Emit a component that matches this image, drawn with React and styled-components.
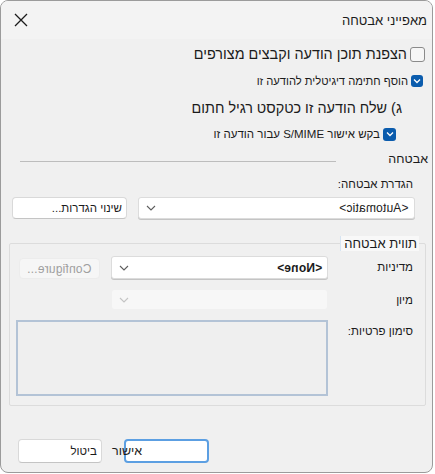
import React from "react";
import styled, { createGlobalStyle } from "styled-components";

const GlobalStyle = createGlobalStyle`
    html, body {
        margin: 0;
        padding: 0;
        background: #ffffff;
    }
    body {
        font-family: "Liberation Sans", "DejaVu Sans", sans-serif;
        color: #1b1b1b;
    }
`;

const Chevron = ({ disabled }) => (
    <svg width="10" height="6" viewBox="0 0 10 6">
        <path
            d="M1 1 L5 5 L9 1"
            fill="none"
            stroke={disabled ? "#c4c4c4" : "#5f5f5f"}
            strokeWidth="1.1"
        />
    </svg>
);

const Check = () => (
    <svg width="8" height="6" viewBox="0 0 8 6">
        <path d="M1 1.5 L4 4.5 L7 1.5" fill="none" stroke="#fff" strokeWidth="1.3" />
    </svg>
);

const App = () => {
    return (
        <>
            <GlobalStyle />
            <Dialog dir="rtl">
                <TitleBar>
                    <Title>מאפייני אבטחה</Title>
                    <CloseBtn>
                        <svg width="14" height="14" viewBox="0 0 14 14">
                            <path d="M1 1 L13 13 M13 1 L1 13" stroke="#1b1b1b" strokeWidth="1.3" />
                        </svg>
                    </CloseBtn>
                </TitleBar>

                <Body>
                    <Options>
                        <CheckRow $indent={7} $h={26}>
                            <Box $size={15} />
                            <CheckText $size={14.4}>הצפנת תוכן הודעה וקבצים מצורפים</CheckText>
                        </CheckRow>
                        <CheckRow $indent={9} $h={28}>
                            <Box $checked $size={12}>
                                <Check />
                            </Box>
                            <CheckText $size={11.2}>הוסף חתימה דיגיטלית להודעה זו</CheckText>
                        </CheckRow>
                        <CheckRow $indent={30} $h={26}>
                            <CheckText $size={14.4}>ג) שלח הודעה זו כטקסט רגיל חתום</CheckText>
                        </CheckRow>
                        <CheckRow $indent={36} $h={26}>
                            <Box $checked $size={13}>
                                <Check />
                            </Box>
                            <CheckText $size={11.5}>בקש אישור S/MIME עבור הודעה זו</CheckText>
                        </CheckRow>
                    </Options>

                    <SectionHead>
                        <SectionLabel>אבטחה</SectionLabel>
                        <Rule />
                    </SectionHead>

                    <FieldLabel>הגדרת אבטחה:</FieldLabel>

                    <SettingsRow>
                        <Select $w={277} $h={22}>
                            <Mirrored>&lt;Automatic&gt;</Mirrored>
                            <Chevron />
                        </Select>
                        <Button $w={115} $h={22}>שינוי הגדרות...</Button>
                    </SettingsRow>

                    <Group>
                        <Legend>תווית אבטחה</Legend>
                        <GroupGrid>
                            <GridLabel>מדיניות</GridLabel>
                            <Select $w={217} $h={23}>
                                <Mirrored $bold>&lt;None&gt;</Mirrored>
                                <Chevron />
                            </Select>
                            <Button $w={81} $h={21} disabled>
                                <Mirrored>Configure...</Mirrored>
                            </Button>

                            <GridLabel>מיון</GridLabel>
                            <Select $w={217} $h={21} $disabled>
                                <span />
                                <Chevron disabled />
                            </Select>
                            <span />

                            <GridLabel>סימון פרטיות:</GridLabel>
                            <Privacy />
                        </GroupGrid>
                    </Group>
                </Body>

                <Footer>
                    <Button $w={84} $h={24}>ביטול</Button>
                    <OkButton>
                        <span>אישור</span>
                    </OkButton>
                </Footer>
            </Dialog>
        </>
    );
};
export default App;

const Dialog = styled.div`
    width: 431px;
    height: 471px;
    border: 1px solid #9b9b9b;
    border-radius: 8px;
    background: #f0f0f0;
    overflow: hidden;
    display: flex;
    flex-direction: column;
`;

const TitleBar = styled.div`
    height: 38px;
    display: flex;
    align-items: center;
    justify-content: space-between;
    padding: 0 5px 0 13px;
    background: #f3f3f3;
`;

const Title = styled.div`
    font-size: 13px;
`;

const CloseBtn = styled.div`
    width: 14px;
    height: 14px;
    display: flex;
`;

const Body = styled.div`
    flex: 1;
    display: flex;
    flex-direction: column;
`;

const Options = styled.div`
    display: flex;
    flex-direction: column;
    padding-top: 2px;
`;

const CheckRow = styled.div`
    display: flex;
    align-items: center;
    gap: 3px;
    height: ${(p) => p.$h}px;
    padding-right: ${(p) => p.$indent}px;
`;

const Box = styled.div`
    width: ${(p) => p.$size}px;
    height: ${(p) => p.$size}px;
    box-sizing: border-box;
    border-radius: 3px;
    display: flex;
    align-items: center;
    justify-content: center;
    border: ${(p) => (p.$checked ? "none" : "1.5px solid #8a8a8a")};
    background: ${(p) => (p.$checked ? "#0b5cad" : "#f6f6f6")};
`;

const CheckText = styled.span`
    font-size: ${(p) => p.$size}px;
    white-space: nowrap;
`;

const SectionHead = styled.div`
    display: flex;
    align-items: center;
    gap: 52px;
    margin-top: 5px;
    padding-right: 4px;
`;

const SectionLabel = styled.span`
    font-size: 12.5px;
`;

const Rule = styled.div`
    width: 316px;
    height: 1px;
    background: #bdbdbd;
    margin-top: 5px;
`;

const FieldLabel = styled.div`
    font-size: 11.5px;
    padding-right: 19px;
    margin-top: 12px;
`;

const SettingsRow = styled.div`
    display: flex;
    gap: 11px;
    padding-right: 17px;
    margin-top: 7px;
`;

const Select = styled.div`
    width: ${(p) => p.$w}px;
    height: ${(p) => p.$h}px;
    box-sizing: border-box;
    display: flex;
    align-items: center;
    justify-content: space-between;
    padding: 0 5px 0 7px;
    border-radius: 3px;
    background: ${(p) => (p.$disabled ? "#f7f7f7" : "#ffffff")};
    border: 1px solid ${(p) => (p.$disabled ? "#f0f0f0" : "#dcdcdc")};
    box-shadow: ${(p) => (p.$disabled ? "none" : "0 1px 0 #c4c4c4")};
    font-size: 12px;
`;

const Mirrored = styled.span`
    display: inline-block;
    direction: ltr;
    unicode-bidi: isolate;
    transform: scaleX(-1);
    font-weight: ${(p) => (p.$bold ? 700 : 400)};
    letter-spacing: 0.2px;
`;

const Button = styled.button`
    width: ${(p) => p.$w}px;
    height: ${(p) => p.$h}px;
    box-sizing: border-box;
    font-family: inherit;
    font-size: 11.5px;
    color: #1b1b1b;
    background: #ffffff;
    border: 1px solid #d9d9d9;
    border-bottom-color: #c4c4c4;
    border-radius: 4px;
    padding: 0 4px;
    text-align: right;
    &:disabled {
        background: #f6f6f6;
        border-color: #ececec;
        color: #9f9f9f;
        text-align: center;
        font-size: 12px;
        justify-self: end;
        margin-top: 2px;
    }
`;

const Group = styled.fieldset`
    margin: 17px 6px 0 8px;
    padding: 5px 0 9px 0;
    border: 1px solid #dcdcdc;
    border-radius: 2px;
    min-width: 0;
`;

const Legend = styled.legend`
    font-size: 13px;
    padding: 0 2px 0 3px;
    margin-right: 6px;
    background: #f8f8f8;
    border-left: 1px solid #d6e4f2;
`;

const GroupGrid = styled.div`
    display: grid;
    grid-template-columns: 97px 217px 92px;
    grid-template-rows: 23px 21px 76px;
    row-gap: 10px;
    justify-content: start;
    align-items: start;
`;

const GridLabel = styled.div`
    font-size: 11.5px;
    padding-right: 12px;
    padding-top: 5px;
`;

const Privacy = styled.div`
    grid-column: 2 / 4;
    width: 312px;
    height: 76px;
    box-sizing: border-box;
    border: 2px solid #b3c3d6;
    background: #efefef;
`;

const Footer = styled.div`
    direction: ltr;
    display: flex;
    gap: 22px;
    padding: 0 0 9px 17px;
`;

const OkButton = styled.div`
    width: 85px;
    height: 24px;
    box-sizing: border-box;
    border: 2px solid #5c9fe2;
    border-radius: 4px;
    background: #ffffff;
    display: flex;
    align-items: center;
    justify-content: flex-start;
    font-size: 12.5px;
    span {
        margin-left: -14px;
        direction: rtl;
        white-space: nowrap;
    }
`;
